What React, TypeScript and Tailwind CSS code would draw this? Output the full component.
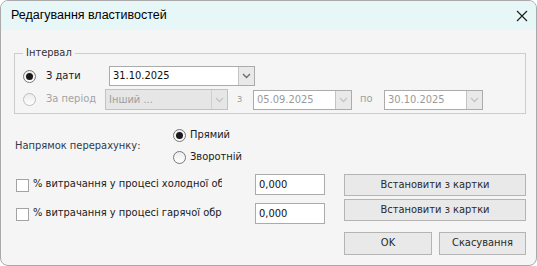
import type { ReactNode } from "react";

const font = { fontFamily: '"DejaVu Sans Condensed", "DejaVu Sans", sans-serif' };

function Radio({ checked, disabled }: { checked?: boolean; disabled?: boolean }) {
  return (
    <span
      className={`flex h-[13px] w-[13px] shrink-0 items-center justify-center rounded-full border bg-gradient-to-b from-[#ececec] to-white ${
        disabled ? "border-[#bdbdbd]" : "border-[#777]"
      }`}
    >
      {checked && <span className="h-[7px] w-[7px] rounded-full bg-[#1a1a1a]" />}
    </span>
  );
}

function Checkbox() {
  return <span className="block h-[13px] w-[13px] shrink-0 border border-[#a3a3a3] bg-white" />;
}

function Chevron({ disabled }: { disabled?: boolean }) {
  return (
    <svg width="9" height="6" viewBox="0 0 9 6">
      <path d="M1 1 L4.5 4.5 L8 1" fill="none" stroke={disabled ? "#c4c4c4" : "#6d6d6d"} strokeWidth="1.4" />
    </svg>
  );
}

function DateBox({ value, width, disabled }: { value: string; width: string; disabled?: boolean }) {
  return (
    <div className={`flex h-[20px] shrink-0 border border-[#ababab] bg-white ${width}`}>
      <div className={`flex-1 pl-[3px] text-[11px] leading-[18px] ${disabled ? "text-[#9a9a9a]" : "text-[#111]"}`}>
        {value}
      </div>
      <div className="flex w-[16px] items-center justify-center border-l border-[#c4c4c4] bg-[#e9e9e9]">
        <Chevron disabled={disabled} />
      </div>
    </div>
  );
}

function Button({ children, width }: { children: ReactNode; width: string }) {
  return (
    <button className={`shrink-0 border border-[#b4b4b4] bg-[#e9e9e9] text-[11px] text-[#2a2a2a] ${width}`}>
      {children}
    </button>
  );
}

export default function App() {
  return (
    <div className="h-[266px] w-[537px] bg-white" style={font}>
      <div className="flex h-full w-full flex-col overflow-hidden rounded-[8px] border border-[#a9a9a9] bg-[#f5f5f5]">
        <div className="flex h-[29px] shrink-0 items-center justify-between bg-[#e7f6f7] pl-[10px] pr-[8px]">
          <span className="text-[12.5px] text-black" style={{ fontFamily: '"Liberation Sans", Arial, sans-serif' }}>
            Редагування властивостей
          </span>
          <svg width="12" height="12" viewBox="0 0 12 12">
            <path d="M1 1 L11 11 M11 1 L1 11" stroke="#1a1a1a" strokeWidth="1.1" />
          </svg>
        </div>

        <div className="flex flex-col pl-[13px] pr-[10px] pt-[16px]">
          <fieldset className="h-[68px] w-[512px] shrink-0 border border-[#cdcdcd] pb-[10px] pl-[8px]">
            <legend className="px-[3px] text-[11px] leading-[14px] text-[#333]">Інтервал</legend>
            <div className="flex flex-col gap-[3px] pt-[6px]">
              <div className="flex h-[20px] items-center">
                <Radio checked />
                <span className="w-[73px] shrink-0 whitespace-nowrap pl-[10px] text-[11px] text-[#1a1a1a]">З дати</span>
                <DateBox value="31.10.2025" width="w-[146px]" />
              </div>
              <div className="flex h-[21px] items-center">
                <Radio disabled />
                <span className="w-[69px] shrink-0 whitespace-nowrap pl-[10px] text-[11px] text-[#a3a3a3]">За період</span>
                <div className="flex h-[21px] w-[123px] shrink-0 border border-[#c2c2c2] bg-[#e6e6e6]">
                  <div className="flex-1 pl-[3px] text-[11px] leading-[19px] text-[#9f9f9f]">Інший ...</div>
                  <div className="flex w-[16px] items-center justify-center border-l border-[#cfcfcf]">
                    <Chevron disabled />
                  </div>
                </div>
                <span className="w-[25px] shrink-0 pl-[9px] text-[11px] text-[#9f9f9f]">з</span>
                <DateBox value="05.09.2025" width="w-[99px]" disabled />
                <span className="w-[32px] shrink-0 pl-[8px] text-[11px] text-[#9f9f9f]">по</span>
                <DateBox value="30.10.2025" width="w-[99px]" disabled />
              </div>
            </div>
          </fieldset>

          <div className="mt-[13px] flex items-center">
            <span className="w-[159px] shrink-0 pl-[1px] text-[11px] text-[#2f3a4a]">Напрямок перерахунку:</span>
            <div className="flex flex-col gap-[6px]">
              <div className="flex h-[16px] items-center gap-[4px]">
                <Radio checked />
                <span className="text-[11px] text-[#1a1a1a]">Прямий</span>
              </div>
              <div className="flex h-[16px] items-center gap-[4px]">
                <Radio />
                <span className="text-[11px] text-[#1a1a1a]">Зворотній</span>
              </div>
            </div>
          </div>

          <div className="mt-[9px] flex">
            <div className="flex shrink-0 flex-col gap-[8px]">
              <div className="flex h-[21px] items-center">
                <span className="shrink-0 pl-[2px] pt-[2px]"><Checkbox /></span>
                <span className="w-[193px] shrink-0 overflow-hidden whitespace-nowrap pl-[4px] text-[11px] text-[#1a1a1a]">
                  % витрачання у процесі холодної обробки
                </span>
                <div className="ml-[33px] h-[21px] w-[70px] shrink-0 border border-[#ababab] bg-white pl-[3px] text-[11px] leading-[19px] text-[#111]">
                  0,000
                </div>
              </div>
              <div className="flex h-[21px] items-center">
                <span className="shrink-0 pl-[2px] pt-[2px]"><Checkbox /></span>
                <span className="w-[193px] shrink-0 overflow-hidden whitespace-nowrap pl-[4px] text-[11px] text-[#1a1a1a]">
                  % витрачання у процесі гарячої обробки
                </span>
                <div className="ml-[33px] h-[21px] w-[70px] shrink-0 border border-[#ababab] bg-white pl-[3px] text-[11px] leading-[19px] text-[#111]">
                  0,000
                </div>
              </div>
            </div>
            <div className="ml-[19px] flex shrink-0 flex-col gap-[3px]">
              <Button width="h-[22px] w-[182px]">Встановити з картки</Button>
              <Button width="h-[22px] w-[182px]">Встановити з картки</Button>
              <div className="mt-[8px] flex gap-[7px]">
                <Button width="h-[23px] w-[88px]">OK</Button>
                <Button width="h-[23px] w-[87px]">Скасування</Button>
              </div>
            </div>
          </div>
        </div>
      </div>
    </div>
  );
}
